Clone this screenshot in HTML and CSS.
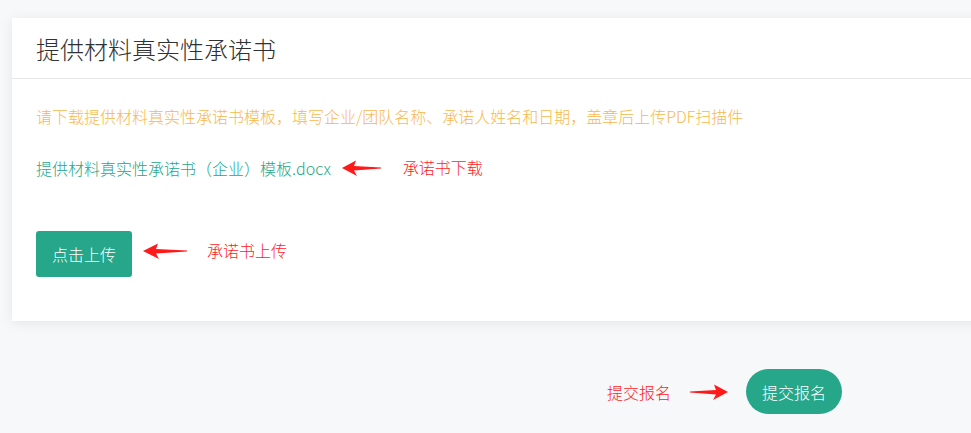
FILE: index.html
```html
<!DOCTYPE html>
<html lang="zh-CN">
<head>
<meta charset="utf-8">
<title>提供材料真实性承诺书</title>
<link rel="stylesheet" href="styles.css">
</head>
<body>
<div class="page">
  <section class="card">
    <header class="card-header">提供材料真实性承诺书</header>
    <div class="card-body">
      <p class="tip">请下载提供材料真实性承诺书模板，填写企业/团队名称、承诺人姓名和日期，盖章后上传PDF扫描件</p>
      <div class="row row-link">
        <a class="file-link" href="#">提供材料真实性承诺书（企业）模板.docx</a>
        <svg class="arrow arrow-a" width="40" height="16" viewBox="0 0 40 16"><path d="M0 8 L14 0.5 L12 6 L39 7.6 L39 8.4 L12 10.5 L15 16 Z" fill="#ff1a1a"/></svg>
        <span class="note note-a">承诺书下载</span>
      </div>
      <div class="row row-upload">
        <button class="btn-upload" type="button">点击上传</button>
        <svg class="arrow arrow-b" width="45" height="16" viewBox="0 0 45 16"><path d="M0 8 L15 0.5 L13 6 L44 7.6 L44 8.4 L13 10.5 L16 16 Z" fill="#ff1a1a"/></svg>
        <span class="note note-b">承诺书上传</span>
      </div>
    </div>
  </section>
  <div class="submit-row">
    <span class="note">提交报名</span>
    <svg class="arrow arrow-c" width="38" height="16" viewBox="0 0 38 16"><path d="M38 8 L24 0.5 L26 6 L0 7.4 L0 8.6 L26 10.5 L23 16 Z" fill="#ff1a1a"/></svg>
    <button class="btn-submit" type="button">提交报名</button>
  </div>
</div>
</body>
</html>
```

FILE: styles.css
```css
html, body {
  margin: 0;
  padding: 0;
  background: #f7f8fa;
  overflow: hidden;
}
body {
  font-family: "Microsoft YaHei", "Noto Sans CJK SC", "Noto Sans", sans-serif;
  font-weight: 300;
  color: #333;
}
.page {
  padding: 18px 0 0 12px;
  width: 971px;
  box-sizing: border-box;
}
.card {
  width: calc(100% + 20px);
  background: #fff;
  box-shadow: 0 2px 12px rgba(0, 0, 0, 0.08);
}
.card-header {
  height: 60px;
  line-height: 62px;
  padding-left: 24px;
  font-size: 24px;
  font-weight: 300;
  color: #303133;
  border-bottom: 1px solid #e8e8e8;
}
.card-body {
  padding: 25px 24px 44px;
}
.tip {
  margin: 0;
  font-size: 16px;
  line-height: 24px;
  color: #f9b84c;
}
.row {
  display: flex;
  align-items: center;
}
.row-link {
  margin-top: 28px;
  height: 24px;
}
.file-link {
  font-size: 16px;
  line-height: 24px;
  color: #26a78a;
  text-decoration: none;
}
.arrow {
  display: block;
  flex: none;
}
.arrow-a {
  margin-left: 11px;
}
.note {
  font-size: 16px;
  line-height: 24px;
  color: #ff1a1a;
}
.note-a {
  margin-left: 21px;
  margin-bottom: 2px;
}
.row-upload {
  margin-top: 51px;
}
.btn-upload {
  width: 96px;
  height: 46px;
  border: none;
  border-radius: 3px;
  background: #26a78a;
  color: #fff;
  font-family: inherit;
  font-weight: inherit;
  font-size: 16px;
  padding: 0;
}
.arrow-b {
  margin-left: 11px;
  margin-top: -6px;
}
.note-b {
  margin-left: 19px;
  margin-bottom: 8px;
}
.submit-row {
  display: flex;
  align-items: center;
  margin-top: 48px;
  margin-left: 595px;
}
.arrow-c {
  margin-left: 19px;
}
.btn-submit {
  margin-left: 18px;
  width: 96px;
  height: 45px;
  border: none;
  border-radius: 23px;
  background: #26a78a;
  color: #fff;
  font-family: inherit;
  font-weight: inherit;
  font-size: 16px;
  padding: 0;
}
```
